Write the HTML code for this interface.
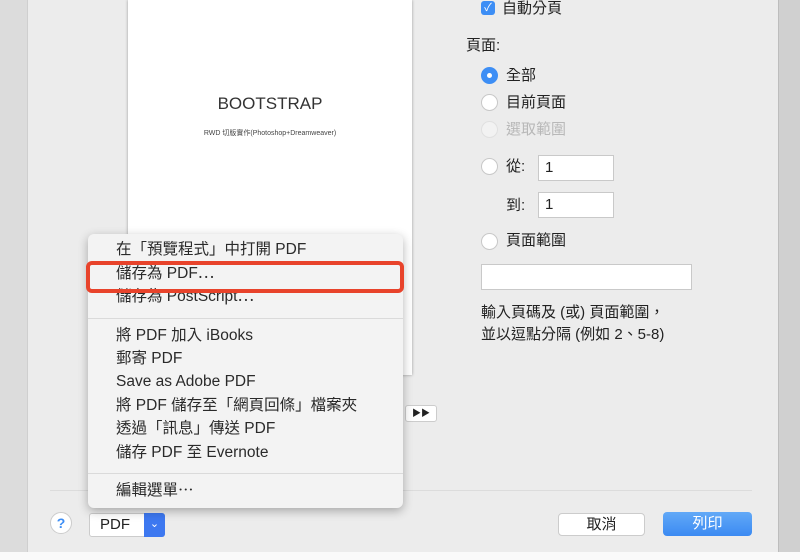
<!DOCTYPE html>
<html><head><meta charset="utf-8"><style>
body{margin:0;width:800px;height:560px;position:relative;overflow:hidden;background:#ececec;font-family:"Liberation Sans","Noto Sans CJK TC",sans-serif;color:#222}
.a{position:absolute}
.t{font-size:15px;line-height:20px}
.radio{position:absolute;width:17px;height:17px;border-radius:50%;background:#fff;border:1px solid #c8c8c8;box-sizing:border-box}
.inp{position:absolute;background:#fff;border:1px solid #c9c9c9;box-sizing:border-box;font-size:15px;line-height:18px;padding:3px 6px}
.mi{position:absolute;left:116px;font-size:15.5px;line-height:20px;color:#2a2a2a}
</style></head><body>
<div class="a" style="left:0;top:0;width:27px;height:560px;background:#dcdcdc;border-right:1px solid #cfcfcf"></div>
<div class="a" style="left:778px;top:0;width:22px;height:560px;background:#d0d0d0;border-left:1px solid #bdbdbd"></div>
<div class="a" style="left:0;top:552px;width:800px;height:8px;background:#fafafa"></div>
<div class="a" style="left:128px;top:0;width:284px;height:375px;background:#fff;box-shadow:0 0 3px rgba(0,0,0,.35)"></div>
<div class="a" style="left:128px;top:94px;width:284px;text-align:center;font-size:17px;color:#333">BOOTSTRAP</div>
<div class="a" style="left:128px;top:128px;width:284px;text-align:center;font-size:7px;color:#444">RWD 切版實作(Photoshop+Dreamweaver)</div>
<div class="a" style="left:405px;top:405px;width:32px;height:17px;background:#fff;border:1px solid #ccc;border-radius:3px;box-sizing:border-box;font-size:9px;text-align:center;line-height:15px">▶▶</div>
<div class="a" style="left:481px;top:1px;width:14px;height:14px;border-radius:3px;background:#3d8ef5;color:#fff;font-size:11px;text-align:center;line-height:14px">✓</div>
<div class="a t" style="left:502px;top:-1px">自動分頁</div>
<div class="a t" style="left:466px;top:36px">頁面:</div>
<div class="radio" style="left:481px;top:67px;background:#3d8ef5;border-color:#3d8ef5"><div style="width:5px;height:5px;background:#fff;border-radius:50%;margin:5px"></div></div>
<div class="a t" style="left:506px;top:66px">全部</div>
<div class="radio" style="left:481px;top:94px"></div><div class="a t" style="left:506px;top:93px">目前頁面</div>
<div class="radio" style="left:481px;top:121px;border-color:#e0e0e0;background:#f2f2f2"></div><div class="a t" style="left:506px;top:120px;color:#b8b8b8">選取範圍</div>
<div class="radio" style="left:481px;top:158px"></div><div class="a t" style="left:506px;top:157px">從:</div>
<div class="inp" style="left:538px;top:155px;width:76px;height:26px">1</div>
<div class="a t" style="left:506px;top:196px">到:</div>
<div class="inp" style="left:538px;top:192px;width:76px;height:26px">1</div>
<div class="radio" style="left:481px;top:233px"></div><div class="a t" style="left:506px;top:231px">頁面範圍</div>
<div class="inp" style="left:481px;top:264px;width:211px;height:26px"></div>
<div class="a" style="left:481px;top:302px;font-size:15px;line-height:22px">輸入頁碼及 (或) 頁面範圍，<br>並以逗點分隔 (例如 2、5-8)</div>
<div class="a" style="left:50px;top:490px;width:702px;height:1px;background:#dcdcdc"></div>
<div class="a" style="left:50px;top:512px;width:22px;height:22px;border-radius:50%;background:#fff;border:1px solid #ccc;box-sizing:border-box;color:#3d8ef5;font-weight:bold;font-size:14px;text-align:center;line-height:20px">?</div>
<div class="a" style="left:89px;top:513px;width:76px;height:24px;background:#fff;border:1px solid #ccc;border-radius:3px;box-sizing:border-box;font-size:15px;line-height:22px;padding-left:10px">PDF</div>
<div class="a" style="left:144px;top:513px;width:21px;height:24px;background:#3d78f0;border-radius:0 3px 3px 0;color:#fff;font-size:11px;text-align:center;line-height:22px">⌄</div>
<div class="a" style="left:558px;top:513px;width:87px;height:23px;background:#fff;border:1px solid #ccc;border-radius:4px;box-sizing:border-box;text-align:center;line-height:21px;font-size:15px">取消</div>
<div class="a" style="left:663px;top:512px;width:89px;height:24px;background:linear-gradient(#62a9f7,#3b8af2);border-radius:4px;text-align:center;line-height:24px;font-size:15px;color:#fff">列印</div>
<div class="a" style="left:88px;top:234px;width:315px;height:274px;background:#f3f3f3;border-radius:6px;box-shadow:0 3px 10px rgba(0,0,0,.3)"></div>
<div class="mi" style="top:240px">在「預覽程式」中打開 PDF</div>
<div class="mi" style="top:264px">儲存為 PDF⋯</div>
<div class="mi" style="top:287px">儲存為 PostScript⋯</div>
<div class="a" style="left:88px;top:318px;width:315px;height:1px;background:#dadada"></div>
<div class="mi" style="top:326px">將 PDF 加入 iBooks</div>
<div class="mi" style="top:349px">郵寄 PDF</div>
<div class="mi" style="top:372px">Save as Adobe PDF</div>
<div class="mi" style="top:396px">將 PDF 儲存至「網頁回條」檔案夾</div>
<div class="mi" style="top:419px">透過「訊息」傳送 PDF</div>
<div class="mi" style="top:443px">儲存 PDF 至 Evernote</div>
<div class="a" style="left:88px;top:473px;width:315px;height:1px;background:#dadada"></div>
<div class="mi" style="top:481px">編輯選單⋯</div>
<div class="a" style="left:86px;top:261px;width:318px;height:32px;border:4px solid #e8432b;border-radius:6px;box-sizing:border-box"></div>
</body></html>
